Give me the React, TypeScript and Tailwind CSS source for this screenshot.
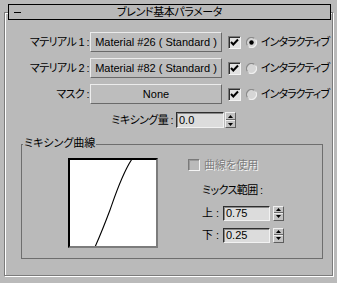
import React from "react";

const font =
  "font-['Liberation_Sans','Noto_Sans_CJK_JP',sans-serif] text-[11px] leading-none [font-feature-settings:'palt'] text-black";

function Spinner({ h = 16 }: { h?: number }) {
  return (
    <div
      className="flex flex-col w-[11px] border border-t-[#efefef] border-l-[#efefef] border-b-[#5e5e5e] border-r-[#5e5e5e] bg-[#c2c2c2]"
      style={{ height: h }}
    >
      <div className="flex-1 flex items-center justify-center border-b border-b-[#6a6a6a]">
        <svg width="5" height="3" viewBox="0 0 5 3">
          <path d="M2.5 0 L5 3 L0 3 Z" fill="#000" />
        </svg>
      </div>
      <div className="flex-1 flex items-center justify-center border-t border-t-[#ededed]">
        <svg width="5" height="3" viewBox="0 0 5 3">
          <path d="M0 0 L5 0 L2.5 3 Z" fill="#000" />
        </svg>
      </div>
    </div>
  );
}

function Field({ value, w, h = 16 }: { value: string; w: number; h?: number }) {
  return (
    <div
      className="flex items-center pl-[2px] bg-[#dcdcdc] border border-t-[#2e2e2e] border-l-[#2e2e2e] border-b-[#f2f2f2] border-r-[#f2f2f2] shadow-[inset_1px_1px_0_#8a8a8a]"
      style={{ width: w, height: h }}
    >
      {value}
    </div>
  );
}

function Check() {
  return (
    <div className="w-[13px] h-[13px] bg-[#e2e2e2] border border-t-[#7a7a7a] border-l-[#7a7a7a] border-b-[#f4f4f4] border-r-[#f4f4f4] shadow-[inset_1px_1px_0_#2f2f2f] flex items-center justify-center">
      <svg width="9" height="9" viewBox="0 0 9 9">
        <path d="M1 4 L3.3 6.5 L8 1.5" fill="none" stroke="#000" strokeWidth="2" />
      </svg>
    </div>
  );
}

function Radio({ on }: { on: boolean }) {
  return (
    <svg width="11" height="11" viewBox="0 0 11 11">
      <circle cx="5.5" cy="5.5" r="5" fill="#d6d6d6" />
      <path d="M1.3 8.2 A5 5 0 0 1 8.2 1.3" fill="none" stroke="#8c8c8c" strokeWidth="1.2" />
      <path d="M9.7 2.8 A5 5 0 0 1 2.8 9.7" fill="none" stroke="#efefef" strokeWidth="1.2" />
      {on && <circle cx="5.5" cy="5.5" r="2.2" fill="#000" />}
    </svg>
  );
}

function MapRow({ label, text, on }: { label: string; text: string; on: boolean }) {
  return (
    <div className="flex items-center h-[20px]">
      <div className="w-[84px] text-right whitespace-nowrap tracking-[-0.6px]">{label}</div>
      <div className="ml-[1px] w-[132px] h-[20px] flex items-center justify-center whitespace-nowrap border border-t-[#ececec] border-l-[#ececec] border-b-[#6a6a6a] border-r-[#6a6a6a] bg-[#bdbdbd]">
        {text}
      </div>
      <div className="ml-[6px]">
        <Check />
      </div>
      <div className="ml-[5px] flex">
        <Radio on={on} />
      </div>
      <div className="ml-[4px] whitespace-nowrap tracking-[-1px]">インタラクティブ</div>
    </div>
  );
}

export default function App() {
  return (
    <div className={`w-[337px] h-[283px] bg-[#bababa] pl-[4px] pt-[12px] overflow-hidden ${font}`}>
      <div className="w-[329px] h-[264px] border border-[#7b7b7b] shadow-[inset_1px_1px_0_#ffffff,1px_1px_0_#ffffff]">
        <div className="ml-[3px] -mt-[9px] w-[323px] h-[16px] border border-black bg-[#b8b8b8] grid grid-cols-[1fr_auto_1fr] items-center">
          <div className="pl-[5px]">
            <div className="w-[7px] h-px bg-black" />
          </div>
          <div className="whitespace-nowrap tracking-[-0.4px]">ブレンド基本パラメータ</div>
          <div />
        </div>

        <div className="mt-[12px] flex flex-col gap-[6px]">
          <MapRow label="マテリアル 1 :" text="Material #26 ( Standard )" on={true} />
          <MapRow label="マテリアル 2 :" text="Material #82 ( Standard )" on={false} />
          <MapRow label="マスク :" text="None" on={false} />
        </div>

        <div className="mt-[8px] flex items-center h-[16px]">
          <div className="w-[168px] text-right whitespace-nowrap tracking-[-0.6px]">ミキシング量 :</div>
          <div className="ml-[3px]">
            <Field value="0.0" w={48} />
          </div>
          <div className="ml-[1px]">
            <Spinner />
          </div>
        </div>

        <div className="relative mt-[16px] ml-[16px] w-[302px] h-[115px] border border-[#6e6e6e]">
          <span className="absolute -top-[7px] left-[1px] px-[1px] bg-[#bababa] whitespace-nowrap">
            ミキシング曲線
          </span>
          <div className="flex">
            <div className="ml-[46px] mt-[13px] w-[90px] h-[90px] bg-white border-2 border-t-black border-l-black border-b-[#7c7c7c] border-r-[#7c7c7c]">
              <svg width="86" height="86" viewBox="0 0 86 86">
                <path
                  d="M25 87 C29 78 34 66 40 50 C46 33 52 14 62 -1"
                  fill="none"
                  stroke="#000"
                  strokeWidth="1.1"
                />
              </svg>
            </div>
            <div className="ml-[30px] mt-[13px] flex flex-col">
              <div className="flex items-center h-[14px]">
                <div className="w-[12px] h-[12px] border border-t-[#7a7a7a] border-l-[#7a7a7a] border-b-[#f4f4f4] border-r-[#f4f4f4] shadow-[inset_1px_1px_0_#9a9a9a]" />
                <div className="ml-[4px] whitespace-nowrap text-[#7e7e7e] [text-shadow:1px_1px_0_#f2f2f2]">
                  曲線を使用
                </div>
              </div>
              <div className="mt-[11px] ml-[14px] h-[14px] flex items-center whitespace-nowrap tracking-[-0.6px]">
                ミックス範囲 :
              </div>
              <div className="mt-[8px] ml-[14px] flex items-center h-[16px]">
                <div className="w-[21px] whitespace-nowrap">上 :</div>
                <Field value="0.75" w={47} h={15} />
                <div className="ml-[3px]">
                  <Spinner h={15} />
                </div>
              </div>
              <div className="mt-[6px] ml-[14px] flex items-center h-[16px]">
                <div className="w-[21px] whitespace-nowrap">下 :</div>
                <Field value="0.25" w={47} h={15} />
                <div className="ml-[3px]">
                  <Spinner h={15} />
                </div>
              </div>
            </div>
          </div>
        </div>
      </div>
    </div>
  );
}
